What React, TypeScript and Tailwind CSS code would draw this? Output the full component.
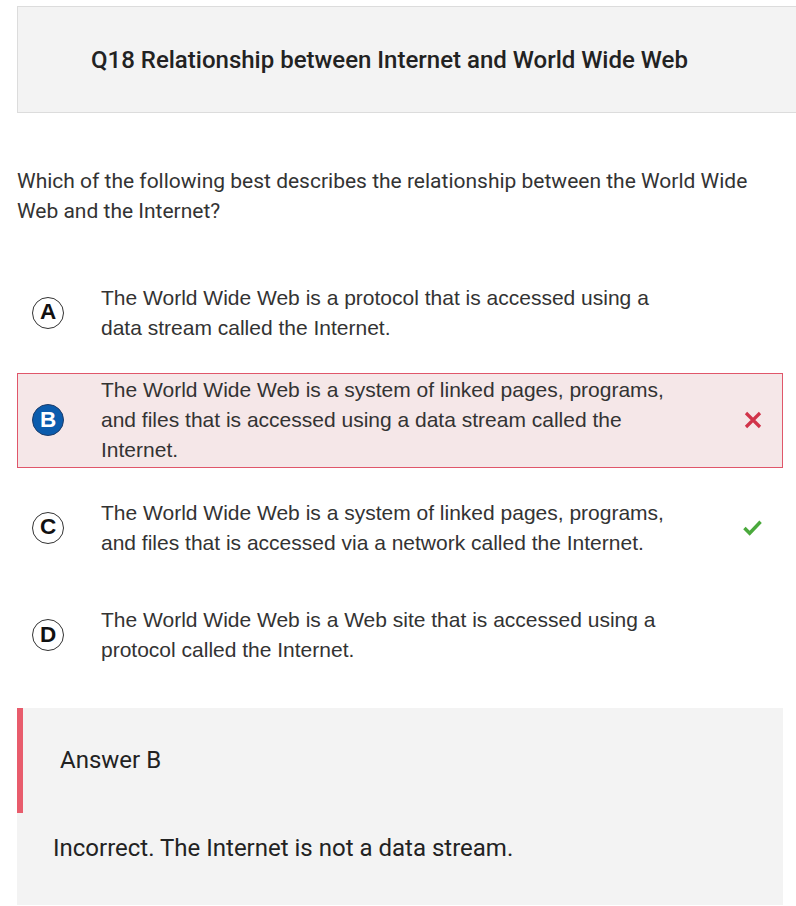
import React from "react";

type Opt = { letter: string; lines: string; state?: "wrong" | "right"; selected?: boolean };

const options: Opt[] = [
  { letter: "A", lines: "The World Wide Web is a protocol that is accessed using a data stream called the Internet." },
  {
    letter: "B",
    lines: "The World Wide Web is a system of linked pages, programs, and files that is accessed using a data stream called the Internet.",
    state: "wrong",
    selected: true,
  },
  {
    letter: "C",
    lines: "The World Wide Web is a system of linked pages, programs, and files that is accessed via a network called the Internet.",
    state: "right",
  },
  { letter: "D", lines: "The World Wide Web is a Web site that is accessed using a protocol called the Internet." },
];

function Row({ o }: { o: Opt }) {
  return (
    <div
      className={
        "flex h-[95px] items-center border pl-[14px] pr-[20px] " +
        (o.selected ? "border-[#e0566a] bg-[#f5e7e8]" : "border-transparent")
      }
    >
      <div
        className={
          "flex h-[32px] w-[32px] shrink-0 items-center justify-center rounded-full border text-[22.5px] font-bold leading-none " +
          (o.selected ? "border-[#1d3d6b] bg-[#0b5cad] text-white" : "border-[#333] bg-white text-[#111]")
        }
        style={{ fontFamily: "'Liberation Sans', Arial, sans-serif" }}
      >
        {o.letter}
      </div>
      <div
        className="ml-[37px] w-[575px] text-[21px] leading-[30px] text-[#333]"
        style={{ fontFamily: "'Liberation Sans', Arial, sans-serif" }}
      >
        {o.lines}
      </div>
      <div className="ml-auto flex w-[19px] items-center justify-center">
        {o.state === "wrong" && (
          <svg width="18" height="18" viewBox="0 0 18 18">
            <path d="M2 2 L16 16 M16 2 L2 16" stroke="#d1344a" strokeWidth="3.2" strokeLinecap="butt" />
          </svg>
        )}
        {o.state === "right" && (
          <svg width="20" height="17" viewBox="0 0 20 17">
            <path d="M1.5 9 L7 14.5 L18.5 2.5" stroke="#4aa93c" strokeWidth="3.6" fill="none" strokeLinejoin="miter" />
          </svg>
        )}
      </div>
    </div>
  );
}

export default function App() {
  return (
    <div
      className="relative h-[906px] w-[796px] overflow-hidden bg-white"
      style={{ fontFamily: "Roboto, 'Liberation Sans', sans-serif" }}
    >
      <div className="ml-[17px] mt-[6px] flex h-[107px] w-[800px] items-center border border-[#dcdcdc] bg-[#f3f3f3] pl-[73px]">
        <h1 className="text-[24px] font-medium text-[#222]">Q18 Relationship between Internet and World Wide Web</h1>
      </div>

      <p className="mx-[17px] mt-[53px] w-[740px] text-[21px] leading-[30px] text-[#333]">
        Which of the following best describes the relationship between the World Wide Web and the Internet?
      </p>

      <div className="mx-[17px] mt-[39px] flex w-[766px] flex-col gap-[12.5px]">
        {options.map((o) => (
          <Row key={o.letter} o={o} />
        ))}
      </div>

      <div className="mx-[17px] mt-[25px] w-[766px] bg-[#f3f3f3]">
        <div className="flex h-[105px] items-center border-l-[6px] border-[#e85c6c] pl-[37px]">
          <span className="text-[24px] text-[#222]">Answer B</span>
        </div>
        <div className="flex h-[92px] items-start pl-[36px] pt-[17px]">
          <span className="text-[24px] text-[#222]">Incorrect. The Internet is not a data stream.</span>
        </div>
      </div>
    </div>
  );
}
